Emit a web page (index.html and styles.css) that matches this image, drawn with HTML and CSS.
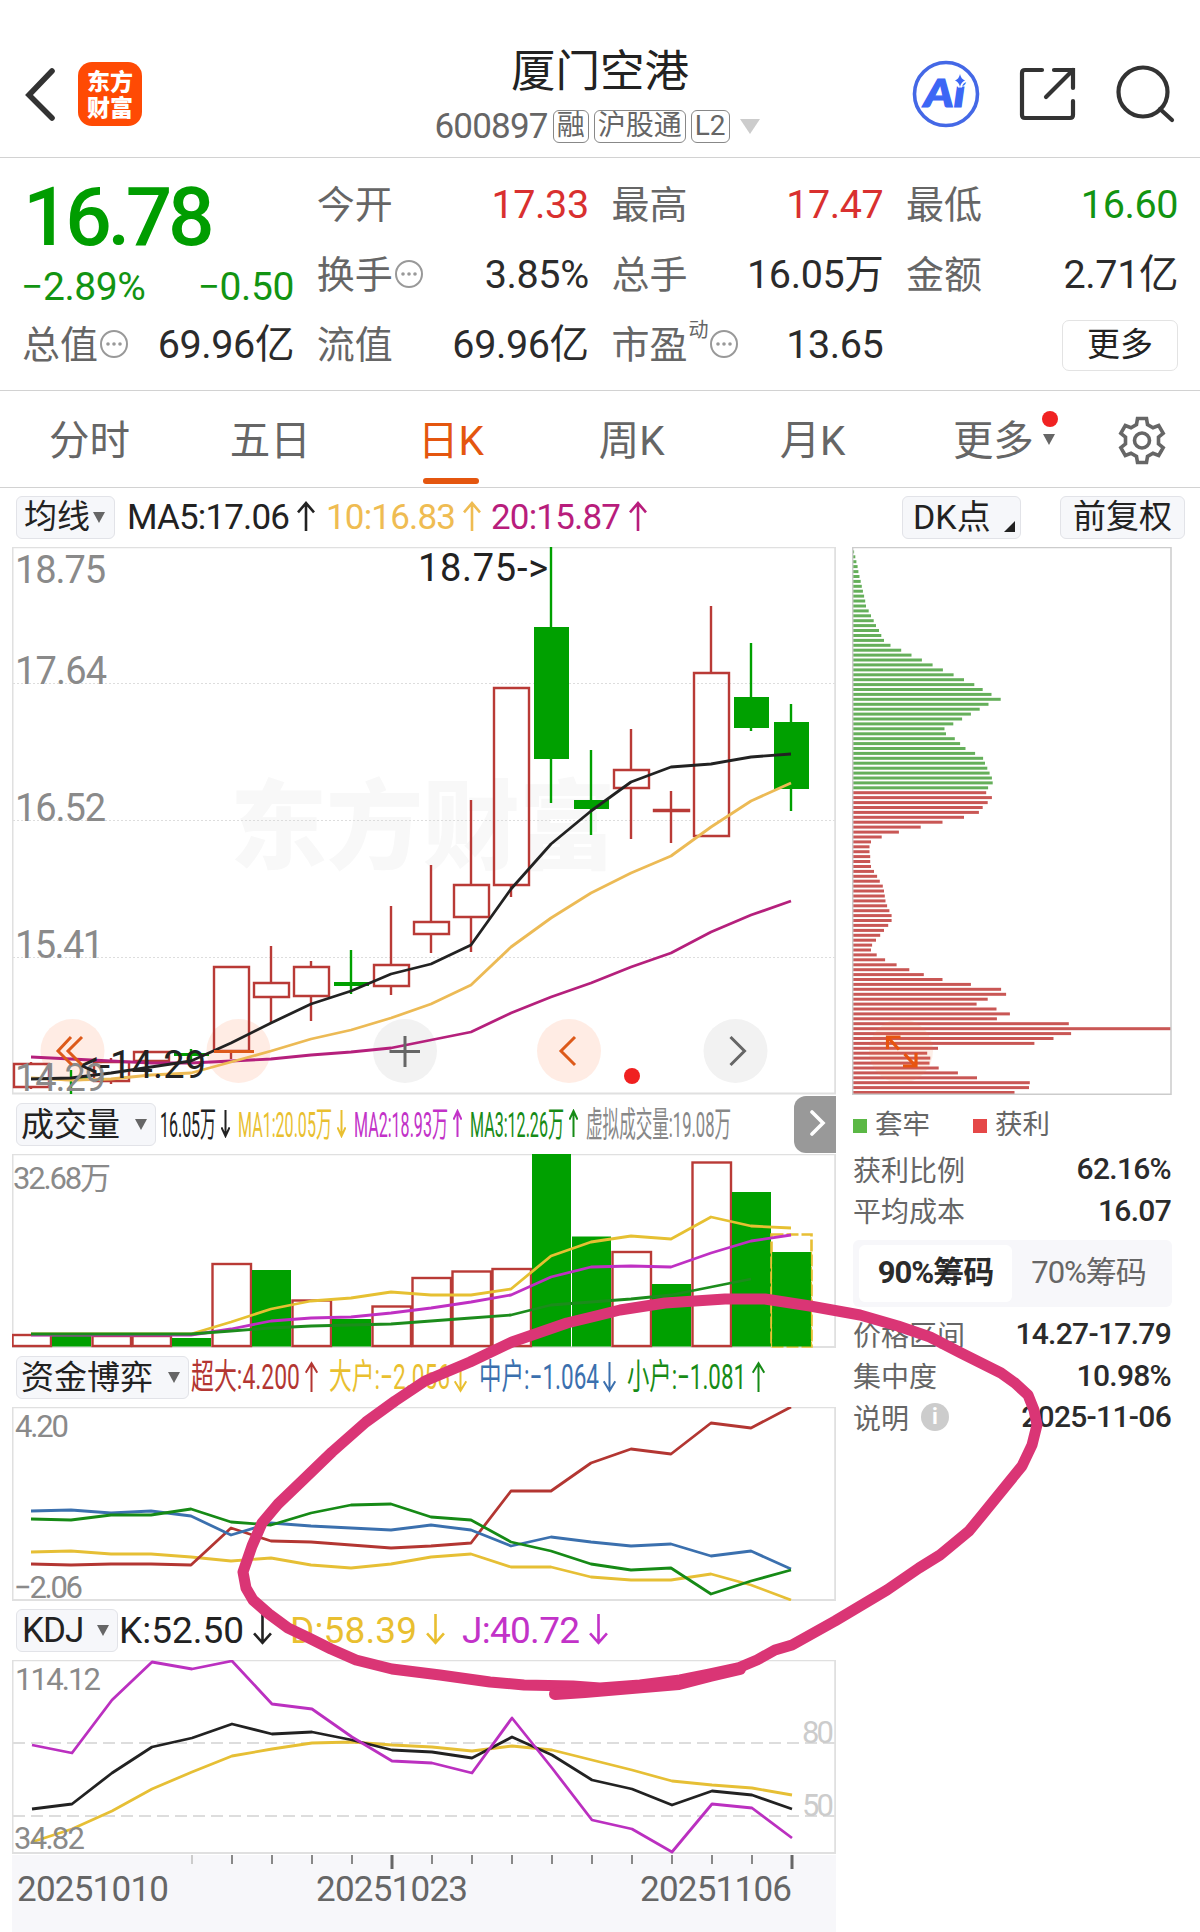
FILE: index.html
```
<!DOCTYPE html>
<html lang="zh-CN">
<head>
  <meta charset="UTF-8" />
  <meta name="viewport" content="width=device-width, initial-scale=1.0" />
  <title>厦门空港 600897</title>
  <link rel="stylesheet" href="styles.css">
</head>
<body>
  <svg class="defs" width="0" height="0">
    <symbol id="up" viewBox="0 0 18 30" preserveAspectRatio="none"><path d="M9 29V2M1 11l8-9 8 9" vector-effect="non-scaling-stroke" /></symbol>
    <symbol id="down" viewBox="0 0 18 30" preserveAspectRatio="none"><path d="M9 1v27M1 19l8 9 8-9" vector-effect="non-scaling-stroke" /></symbol>
    <symbol id="dots" viewBox="0 0 30 34">
      <ellipse cx="15" cy="17" rx="13" ry="13" fill="none" stroke="#999" stroke-width="2" />
      <circle cx="9" cy="17" r="1.8" fill="#999" /><circle cx="15" cy="17" r="1.8" fill="#999" /><circle cx="21" cy="17" r="1.8" fill="#999" />
    </symbol>
  </svg>

  <header class="header">
    <div class="header-left">
      <svg class="back" width="34" height="60" viewBox="0 0 34 60"><path d="M30 7L7 31l23 23" /></svg>
      <div class="logo"><span>东方</span><span>财富</span></div>
    </div>
    <div class="header-title">
      <h1>厦门空港</h1>
      <div class="code">
        <span class="code-num">600897</span>
        <span class="tag">融</span><span class="tag">沪股通</span><span class="tag">L2</span>
        <i class="tri tri-light"></i>
      </div>
    </div>
    <div class="header-icons">
      <svg width="68" height="68" viewBox="0 0 68 68">
        <circle cx="34" cy="34" r="31.5" fill="none" stroke="#4468e6" stroke-width="3.6" />
        <text class="ai-text" x="12" y="47" textLength="41" lengthAdjust="spacingAndGlyphs">Ai</text>
        <path d="M48 14q1 5 5 6.500-4 1.500-5 6.500-1-5-5-6.500 4-1.500 5-6.500z" fill="#3c66f5" stroke="#fff" stroke-width="4" paint-order="stroke" />
      </svg>
      <svg width="60" height="60" viewBox="0 0 60 60" class="line-icon">
        <path d="M24 6H7q-3 0-3 3v42q0 3 3 3h45q3 0 3-3V37M36 6h19v18M55 6L28 33" />
      </svg>
      <svg width="60" height="60" viewBox="0 0 60 60" class="line-icon">
        <circle cx="28" cy="28" r="24.500" /><path d="M45 45l12 11" />
      </svg>
    </div>
  </header>

  <section class="quote">
    <div class="price-box">
      <div class="price">16.78</div>
      <div class="change"><span>−2.89%</span><span>−0.50</span></div>
    </div>
    <div class="cell"><label>今开</label><b class="red">17.33</b></div>
    <div class="cell"><label>最高</label><b class="red">17.47</b></div>
    <div class="cell"><label>最低</label><b class="green">16.60</b></div>
    <div class="cell"><label>换手</label><svg class="more-dots"><use href="#dots" /></svg><b>3.85%</b></div>
    <div class="cell"><label>总手</label><b>16.05万</b></div>
    <div class="cell"><label>金额</label><b>2.71亿</b></div>
    <div class="cell"><label>总值</label><svg class="more-dots"><use href="#dots" /></svg><b>69.96亿</b></div>
    <div class="cell"><label>流值</label><b>69.96亿</b></div>
    <div class="cell"><label>市盈<sup>动</sup></label><svg class="more-dots"><use href="#dots" /></svg><b>13.65</b></div>
    <div class="cell"><button class="more-btn">更多</button></div>
  </section>

  <nav class="tabs">
    <a>分时</a>
    <a>五日</a>
    <a class="active">日K</a>
    <a>周K</a>
    <a>月K</a>
    <a class="tab-more">更多<i class="tri"></i></a>
    <span class="gear">
      <svg width="50" height="50" viewBox="0 0 50 50">
        <path d="M19.500 8.500L20.500 2.500h9l1 6 5.500 3.200 5.700-2.200 4.500 7.800-4.700 3.900v6.600l4.700 3.900-4.500 7.800-5.700-2.200-5.500 3.200-1 6h-9l-1-6-5.500-3.200-5.700 2.200-4.500-7.800 4.700-3.900v-6.600l-4.700-3.900 4.500-7.800 5.700 2.200z" />
        <circle cx="25" cy="24.500" r="7.500" />
      </svg>
    </span>
  </nav>

  <div class="ma-bar">
    <button class="picker picker-ma">均线<i class="tri"></i></button>
    <svg class="legend" width="540" height="59" viewBox="120 488 540 59">
      <g class="c-black"><text x="127" y="529" textLength="163">MA5:17.06</text><use href="#up" x="297" y="501" width="18" height="31" /></g>
      <g class="c-amber"><text x="326" y="529" textLength="130">10:16.83</text><use href="#up" x="463" y="501" width="18" height="31" /></g>
      <g class="c-rose"><text x="491" y="529" textLength="130">20:15.87</text><use href="#up" x="629" y="501" width="18" height="31" /></g>
    </svg>
    <button class="picker picker-dk">DK点<i class="corner"></i></button>
    <button class="picker picker-fq">前复权</button>
  </div>

  <main class="board">
    <div class="charts">
      <svg class="chart" width="824" height="548" viewBox="12 547 824 548">
        <text class="watermark" x="230" y="861" textLength="386">东方财富</text>
        <path class="grid-dot" d="M13 683.500H835M13 820.500H835M13 957.500H835" />
        <path class="frame" d="M12.500 547.300H835.200V1093.500H12.500z" />
        <g fill="#ffe9df" fill-opacity=".85">
          <circle cx="72.500" cy="1051" r="32" /><circle cx="238.500" cy="1051" r="32" /><circle cx="569" cy="1051" r="32" />
        </g>
        <g fill="#f2f2f2"><circle cx="405" cy="1051" r="32" /><circle cx="735.500" cy="1051" r="32" /></g>
        <g id="candles"></g>
        <g class="ma-line">
          <polyline stroke="#b5207c" points="31,1057 71,1059 111,1061 151,1063 191,1063 231,1061 271,1059 311,1055 351,1052 391,1048 431,1040 471,1032 511,1013 551,997 591,983 631,967 671,953 711,932 751,915 791,901" />
          <polyline stroke="#ecba55" points="31,1078 71,1080 111,1079 151,1075 191,1073 231,1062 271,1051 311,1039 351,1030 391,1018 431,1004 471,985 511,947 551,918 591,893 631,873 671,856 711,827 751,801 791,783" />
          <polyline stroke="#222" points="31,1079 71,1078 111,1073 151,1067 191,1061 231,1043 271,1023 311,1004 351,991 391,974 431,964 471,945 511,889 551,844 591,811 631,782 671,767 711,764 751,757 791,754" />
        </g>
        <g class="axis">
          <text x="15" y="583" textLength="91">18.75</text>
          <text x="15" y="684" textLength="92">17.64</text>
          <text x="15" y="821" textLength="91">16.52</text>
          <text x="15" y="958" textLength="89">15.41</text>
          <text x="15" y="1091" textLength="91">14.29</text>
        </g>
        <g class="mark">
          <text x="418" y="581" textLength="130">18.75-&gt;</text>
          <text x="80" y="1078" textLength="126">&lt;-14.29</text>
        </g>
        <path class="nav-orange" d="M71 1037l-13 14 14 14M82 1037l-14 14 14 14M575 1037l-14 14 14 14" />
        <path d="M214 1051.500h40" stroke="#dd5a1a" stroke-width="3" />
        <path class="nav-gray" d="M389.500 1051.500h30.500M405 1036v31M730.500 1037l14 14-14 14" />
        <circle cx="632" cy="1076" r="8" fill="#f02020" />
      </svg>

      <div class="bar">
        <button class="picker picker-vol">成交量<i class="tri"></i></button>
        <svg class="legend thin" width="638" height="59" viewBox="156 1095 638 59">
          <g class="c-black"><text x="160" y="1137" textLength="56" lengthAdjust="spacingAndGlyphs">16.05万</text><use href="#down" x="221" y="1109" width="9" height="29" /></g>
          <g class="c-yellow"><text x="238" y="1137" textLength="94" lengthAdjust="spacingAndGlyphs">MA1:20.05万</text><use href="#down" x="337" y="1109" width="9" height="29" /></g>
          <g class="c-purple"><text x="354" y="1137" textLength="94" lengthAdjust="spacingAndGlyphs">MA2:18.93万</text><use href="#up" x="453" y="1109" width="9" height="29" /></g>
          <g class="c-green"><text x="470" y="1137" textLength="94" lengthAdjust="spacingAndGlyphs">MA3:12.26万</text><use href="#up" x="569" y="1109" width="9" height="29" /></g>
          <g class="c-gray"><text x="586" y="1137" textLength="145" lengthAdjust="spacingAndGlyphs">虚拟成交量:19.08万</text></g>
        </svg>
        <button class="slide-btn"><svg width="16" height="26" viewBox="0 0 16 26"><path d="M2 2l11 11L2 24" /></svg></button>
      </div>

      <svg class="chart" width="824" height="194" viewBox="12 1154 824 194">
        <path class="frame" d="M12.500 1154.200H835.200V1347H12.500z" />
        <text class="axis sm" x="13" y="1189" textLength="98">32.68万</text>
        <g id="volumes"></g>
        <rect x="771.500" y="1234.500" width="40" height="112" fill="none" stroke="#e8bf35" stroke-width="2.600" stroke-dasharray="12 3" />
        <rect x="772" y="1252" width="39" height="94.500" fill="#00a000" />
        <path d="M771.500 1252v94M811.500 1252v94" stroke="#e8bf35" stroke-width="1.200" stroke-dasharray="12 3" />
        <g class="ma-line">
          <polyline stroke="#e6c032" points="31,1334 191,1334 231,1322 271,1309 311,1301 351,1298 391,1292 431,1295 471,1295 511,1289 551,1256 591,1242 631,1236 671,1239 711,1217 751,1226 791,1228" />
          <polyline stroke="#bf30c3" points="31,1335 191,1335 231,1329 271,1321 311,1318 351,1317 391,1313 431,1308 471,1302 511,1295 551,1277 591,1267 631,1266 671,1267 711,1253 751,1241 791,1235" />
          <polyline stroke="#1c8c1c" points="31,1334 191,1334 231,1331 271,1328 311,1326 351,1325 391,1324 431,1321 471,1318 511,1315 551,1305 591,1302 631,1299 671,1295 711,1287 751,1279" />
        </g>
      </svg>

      <div class="bar">
        <button class="picker picker-fund">资金博弈<i class="tri"></i></button>
        <svg class="legend thin" width="640" height="59" viewBox="189 1348 640 59">
          <g class="c-red"><text x="191" y="1389" textLength="109" lengthAdjust="spacingAndGlyphs">超大:4.200</text><use href="#up" x="305" y="1361" width="13" height="32" /></g>
          <g class="c-yellow"><text x="329" y="1389" textLength="121" lengthAdjust="spacingAndGlyphs">大户:−2.056</text><use href="#down" x="454" y="1361" width="13" height="32" /></g>
          <g class="c-blue"><text x="479" y="1389" textLength="120" lengthAdjust="spacingAndGlyphs">中户:−1.064</text><use href="#down" x="603" y="1361" width="13" height="32" /></g>
          <g class="c-green"><text x="627" y="1389" textLength="119" lengthAdjust="spacingAndGlyphs">小户:−1.081</text><use href="#up" x="752" y="1361" width="13" height="32" /></g>
        </svg>
      </div>

      <svg class="chart" width="824" height="194" viewBox="12 1407 824 194">
        <path class="frame" d="M12.500 1407.300H835.200V1600H12.500z" />
        <g class="ma-line">
          <polyline stroke="#e6bf35" points="31,1552 71,1551 111,1554 151,1554 191,1557 231,1561 271,1558 311,1565 351,1568 391,1564 431,1557 471,1554 511,1567 551,1567 591,1577 631,1580 671,1580 711,1574 751,1585 791,1600" />
          <polyline stroke="#b33632" points="31,1564 71,1565 111,1564 151,1564 191,1565 231,1528 271,1541 311,1542 351,1545 391,1548 431,1546 471,1543 511,1491 551,1491 591,1463 631,1449 671,1454 711,1423 751,1428 791,1407" />
          <polyline stroke="#3b70ae" points="31,1511 71,1510 111,1513 151,1511 191,1516 231,1535 271,1523 311,1526 351,1528 391,1530 431,1525 471,1530 511,1546 551,1537 591,1542 631,1546 671,1544 711,1556 751,1551 791,1569" />
          <polyline stroke="#168a16" points="31,1519 71,1520 111,1515 151,1515 191,1509 231,1522 271,1525 311,1513 351,1505 391,1504 431,1517 471,1520 511,1542 551,1551 591,1564 631,1570 671,1568 711,1594 751,1581 791,1570" />
        </g>
        <g class="axis sm">
          <text x="15" y="1437" textLength="54">4.20</text>
          <text x="14" y="1598" textLength="69">−2.06</text>
        </g>
      </svg>

      <div class="bar">
        <button class="picker picker-kdj">KDJ<i class="tri"></i></button>
        <svg class="legend big" width="600" height="59" viewBox="118 1601 600 59">
          <g class="c-black"><text x="119" y="1643" textLength="125">K:52.50</text><use href="#down" x="253" y="1613" width="19" height="32" /></g>
          <g class="c-yellow"><text x="290" y="1643" textLength="127">D:58.39</text><use href="#down" x="426" y="1613" width="19" height="32" /></g>
          <g class="c-purple"><text x="462" y="1643" textLength="118">J:40.72</text><use href="#down" x="589" y="1613" width="19" height="32" /></g>
        </svg>
      </div>

      <svg class="chart" width="824" height="272" viewBox="12 1660 824 272">
        <rect x="12" y="1855" width="824" height="77" fill="#f7f7fa" />
        <path d="M13 1743H835M13 1816H835" stroke="#ddd" stroke-width="2" stroke-dasharray="12 6" />
        <path class="frame" d="M12.500 1660.300H835.200V1853H12.500z" />
        <g class="ma-line">
          <polyline stroke="#e6bf35" points="32,1842 72,1829 112,1811 152,1789 192,1772 232,1756 272,1749 312,1743 352,1742 392,1745 432,1747 472,1751 512,1746 552,1750 592,1760 632,1770 672,1781 712,1785 752,1788 792,1795" />
          <polyline stroke="#222" points="32,1809 72,1804 112,1773 152,1747 192,1738 232,1724 272,1734 312,1732 352,1740 392,1750 432,1752 472,1758 512,1737 552,1755 592,1780 632,1789 672,1805 712,1791 752,1795 792,1809" />
          <polyline stroke="#bb30c0" points="32,1745 72,1753 112,1700 152,1662 192,1669 232,1661 272,1704 312,1709 352,1737 392,1761 432,1763 472,1773 512,1718 552,1768 592,1820 632,1829 672,1852 712,1804 752,1808 792,1838" />
        </g>
        <g class="axis sm">
          <text x="15" y="1690" textLength="86">114.12</text>
          <text x="14" y="1849" textLength="71">34.82</text>
          <text class="faint" x="802" y="1743" textLength="32">80</text>
          <text class="faint" x="802" y="1816" textLength="32">50</text>
        </g>
        <path d="M192 1855v9" stroke="#ccc" stroke-width="2" />
        <path d="M232 1855v9M272 1855v9M312 1855v9M352 1855v9M432 1855v9M472 1855v9M512 1855v9M552 1855v9M592 1855v9M632 1855v9M672 1855v9M712 1855v9M752 1855v9" stroke="#888" stroke-width="2" />
        <path d="M392 1855v14M792 1855v14" stroke="#666" stroke-width="3" />
        <g class="dates">
          <text x="17" y="1901" textLength="152">20251010</text>
          <text x="316" y="1901" textLength="152">20251023</text>
          <text x="640" y="1901" textLength="152">20251106</text>
        </g>
      </svg>
    </div>

    <aside class="chips">
      <svg class="chart" width="320" height="548" viewBox="852 547 320 548">
        <g id="chips"></g>
        <path d="M852.700 547.500H1171V1094.300H852.700z" fill="none" stroke="#ccc" stroke-width="1.500" />
        <circle cx="901" cy="1051" r="32" fill="#f37b45" opacity=".13" />
        <path d="M887.500 1049v-12h13M888 1037.500l11 12M916 1053v13h-13M915.500 1066l-11-12" fill="none" stroke="#e8540e" stroke-width="3.200" />
      </svg>
      <div class="chips-legend">
        <span><i class="sq sq-green"></i>套牢</span>
        <span><i class="sq sq-red"></i>获利</span>
      </div>
      <dl>
        <div><dt>获利比例</dt><dd>62.16%</dd></div>
        <div><dt>平均成本</dt><dd>16.07</dd></div>
      </dl>
      <div class="segment"><span class="on">90%筹码</span><span>70%筹码</span></div>
      <dl>
        <div><dt>价格区间</dt><dd>14.27-17.79</dd></div>
        <div><dt>集中度</dt><dd>10.98%</dd></div>
        <div><dt>说明<i class="info">i</i></dt><dd>2025-11-06</dd></div>
      </dl>
    </aside>
  </main>

  <!-- hand drawn marker -->
  <svg class="marker" width="1200" height="1932" viewBox="0 0 1200 1932">
    <polyline stroke-width="11" points="243,1572 246,1588 253,1600 269,1614 288,1628 309,1638 331,1649 356,1660 392,1669 440,1675 490,1682 524,1685 573,1686 600,1688 640,1685 680,1680 710,1674 738,1668 757,1660 775,1650 792,1645 835,1621 887,1590 919,1568 940,1555 969,1531 983,1514 996,1498 1022,1466 1032,1445 1037,1425 1034,1410 1028,1395 1015,1383 1001,1373 961,1353 930,1337 898,1326 860,1315 810,1306 765,1299 725,1299 665,1303 620,1310 600,1315 567,1323 512,1342 470,1362 425,1381 395,1401 366,1422 332,1452 303,1480 278,1504 262,1523 252,1546 243,1572" />
    <polyline stroke-width="12" points="555,1694 585,1692 620,1689 679,1684 710,1676 740,1669" />
  </svg>

  <script>
    const RED = '#b93a36';
    const GREEN = '#00a000';

    // [up, high, low, top, bottom]
    const candles = [
      [1, 1062, 1089, 1064, 1087], [0, 1070, 1094, 1077, 1080], [1, 1058, 1084, 1062, 1081],
      [1, 1052, 1061, 1052, 1061], [0, 1049, 1060, 1053, 1056], [1, 967, 1059, 967, 1051],
      [1, 946, 1023, 983, 997], [1, 961, 1021, 967, 996], [0, 950, 994, 982, 986],
      [1, 906, 995, 965, 986], [1, 865, 953, 922, 934], [1, 800, 952, 885, 917],
      [1, 688, 897, 688, 885], [0, 547, 803, 627, 759], [0, 750, 835, 800, 809],
      [1, 729, 839, 770, 788], [1, 791, 843, 810, 811], [1, 606, 836, 673, 836],
      [0, 643, 731, 697, 728], [0, 704, 811, 722, 789]
    ];

    // [up, top]
    const volumes = [
      [1, 1335], [0, 1336], [1, 1336], [1, 1336], [0, 1338], [1, 1264], [0, 1270],
      [1, 1300.5], [0, 1319], [1, 1306.5], [1, 1278], [1, 1271.5], [1, 1269],
      [0, 1154], [0, 1236.5], [1, 1252], [0, 1284], [1, 1162.5], [0, 1192]
    ];

    const chips = [
      3, 6, 9, 12, 14, 17, 20, 23, 26, 29, 32, 34, 41, 47, 54, 60, 68, 74, 81, 98, 126, 153, 180,
      208, 235, 263, 290, 317, 339, 362, 386, 354, 331, 308, 285, 262, 239, 243, 266, 280, 294,
      319, 340, 345, 351, 357, 363, 365, 353, 348, 363, 352, 339, 329, 290, 234, 177, 120, 75, 47,
      43, 43, 45, 45, 47, 55, 63, 70, 78, 81, 83, 85, 89, 95, 101, 101, 92, 81, 71, 60, 50, 47, 62,
      84, 114, 147, 185, 234, 308, 387, 400, 352, 323, 375, 410, 376, 564, 831, 570, 524, 474, 222,
      194, 202, 200, 224, 274, 324, 462, 460, 422
    ];
    const trapped = 49;

    document.getElementById('candles').innerHTML = candles.map(([up, high, low, top, bottom], i) => {
      const x = 31 + i * 40;
      if (up) {
        return `<path d="M${x} ${high}V${top}M${x} ${bottom}V${low}M${x - 17} ${top}h35V${bottom}h-35z" fill="none" stroke="${RED}" stroke-width="2.4"/>`;
      }
      return `<path d="M${x} ${high}V${low}" stroke="${GREEN}" stroke-width="2.4"/>
        <rect x="${x - 17}" y="${top}" width="35" height="${bottom - top}" fill="${GREEN}"/>`;
    }).join('');

    document.getElementById('volumes').innerHTML = volumes.map(([up, top], i) => {
      const x = 32 + i * 40;
      if (up) {
        return `<rect x="${x - 19.5}" y="${top}" width="38.5" height="${1346 - top}" fill="none" stroke="${RED}" stroke-width="2.4"/>`;
      }
      return `<rect x="${x - 20}" y="${top}" width="39" height="${1346.5 - top}" fill="${GREEN}"/>`;
    }).join('');

    document.getElementById('chips').innerHTML = chips.map((v, i) =>
      `<rect x="853" y="${(550.4 + i * 4.915).toFixed(1)}" width="${(v / 831 * 318).toFixed(1)}" height="3" fill="${i < trapped ? '#65af5a' : '#c95755'}"/>`
    ).join('');
  </script>
</body>
</html>
```

FILE: styles.css
```
* {
  box-sizing: border-box;
}
body {
  margin: 0;
  width: 1200px;
  height: 1932px;
  position: relative;
  overflow: hidden;
  background: #fff;
  color: #2b2b2b;
  font-family: Roboto, "Noto Sans CJK SC", sans-serif;
}
.defs {
  position: absolute;
}
button {
  font-family: inherit;
  padding: 0;
  color: #222;
}
i {
  font-style: normal;
}
svg {
  flex: none;
}
.red {
  color: #d9302f;
}
.green {
  color: #129412;
}
.tri {
  display: inline-block;
  border: 6.5px solid transparent;
  border-top: 11px solid #666;
  border-bottom: 0;
}
.tri-light {
  border-width: 15px 10.5px 0;
  border-top-color: #ccc;
  margin-left: 5px;
}

/* header */
.header {
  height: 158px;
  border-bottom: 1px solid #d2d2d2;
  display: grid;
  grid-template-columns: 400px 400px 400px;
  padding-top: 30px;
}
.header-left {
  display: flex;
  align-items: center;
  padding-left: 22px;
}
.back path {
  fill: none;
  stroke: #333;
  stroke-width: 5.6;
  stroke-linecap: round;
}
.logo {
  width: 64px;
  height: 64px;
  margin-left: 22px;
  border-radius: 14px;
  background: #ff4a04;
  color: #fff;
  font: 900 23px/27px "Noto Sans CJK SC", sans-serif;
  display: flex;
  flex-direction: column;
  align-items: center;
  justify-content: center;
}
.logo span {
  margin-top: -1px;
}
.header-title {
  display: flex;
  flex-direction: column;
  align-items: center;
}
.header-title h1 {
  margin: 15px 0 0;
  font-size: 44.5px;
  font-weight: 400;
  line-height: 54px;
  color: #222;
}
.code {
  display: flex;
  align-items: center;
  gap: 5px;
  height: 34px;
  margin: 10px 6px 0 0;
  font-size: 35px;
  line-height: 34px;
  color: #666;
}
.code-num {
  letter-spacing: -0.8px;
  padding-top: 2px;
}
.tag {
  height: 33px;
  padding: 0 3px;
  border: 1.5px solid #888;
  border-radius: 6px;
  font-size: 28px;
  line-height: 30px;
}
.header-icons {
  display: flex;
  align-items: center;
  padding-left: 112px;
  gap: 38px;
}
.header-icons svg + svg + svg {
  margin-left: -1px;
}
.ai-text {
  font: italic 900 38px Lato, sans-serif;
  fill: #3c66f5;
  stroke: #3c66f5;
  stroke-width: 1.2;
}
.line-icon {
  fill: none;
  stroke: #333;
  stroke-width: 4.2;
  stroke-linecap: round;
}

/* quote */
.quote {
  height: 233px;
  padding: 12px 22px 0 23px;
  border-bottom: 1px solid #d2d2d2;
  display: grid;
  grid-template-columns: repeat(4, 271px);
  grid-template-rows: repeat(3, 70px);
  column-gap: 23.700px;
}
.price-box {
  grid-row: span 2;
  color: #009d00;
}
.price {
  font-size: 82px;
  font-weight: 500;
  line-height: 94px;
  letter-spacing: -4.4px;
}
.change {
  display: flex;
  justify-content: space-between;
  font-size: 39px;
  line-height: 46px;
  letter-spacing: -0.4px;
  color: #129412;
}
.change span:first-child {
  margin-left: -2px;
}
.cell {
  display: flex;
  align-items: center;
  font-size: 38px;
  line-height: 50px;
}
.cell label {
  color: #666;
  margin-left: -1px;
}
.cell b {
  margin-left: auto;
  font-size: 39.500px;
  font-weight: 400;
  letter-spacing: -0.4px;
}
.cell sup {
  font-size: 20px;
  line-height: 0;
  position: relative;
  top: -7px;
  margin-left: 1px;
}
.more-dots {
  width: 30px;
  height: 34px;
  margin: -3px 0 0 1px;
}
.more-btn {
  width: 116px;
  height: 51px;
  margin-left: auto;
  border: 1.5px solid #e3e3e3;
  border-radius: 7px;
  background: #fff;
  font-size: 33px;
  line-height: 44px;
}

/* period tabs */
.tabs {
  height: 97px;
  border-bottom: 1px solid #d2d2d2;
  display: grid;
  grid-template-columns: repeat(6, 180.800px) 1fr;
}
.tabs a {
  position: relative;
  left: -1px;
  font-size: 40.5px;
  line-height: 100px;
  text-align: center;
  color: #666;
}
.tabs .active {
  color: #e4560f;
}
.tabs .active::after {
  content: "";
  position: absolute;
  left: 62px;
  bottom: 7px;
  width: 56px;
  height: 6px;
  border-radius: 3px;
  background: #e4560f;
}
.tab-more .tri {
  position: absolute;
  left: 140px;
  top: 43px;
}
.tab-more::after {
  content: "";
  position: absolute;
  left: 139px;
  top: 20px;
  width: 16px;
  height: 16px;
  border-radius: 50%;
  background: #f02222;
}
.gear {
  display: flex;
  align-items: center;
  justify-content: center;
}
.gear svg {
  fill: none;
  stroke: #666;
  stroke-width: 3.6;
}

/* indicator bars */
.ma-bar {
  height: 59px;
  display: flex;
  align-items: center;
  padding: 0 16px 1px;
}
.ma-bar .legend {
  margin-left: 5px;
}
.bar {
  height: 59px;
  display: flex;
  align-items: center;
  padding-left: 4px;
}
.picker {
  height: 43px;
  flex: none;
  display: flex;
  align-items: center;
  border: 1.5px solid #e2e3e8;
  border-radius: 6px;
  background: #f6f7fa;
  font-size: 33px;
  line-height: 40px;
  white-space: nowrap;
}
.picker-ma {
  width: 99px;
  padding-left: 7px;
}
.picker-ma .tri {
  margin-left: 3px;
}
.picker-dk {
  width: 119px;
  margin-left: 242px;
  padding-left: 10px;
  position: relative;
  font-size: 34px;
}
.corner {
  position: absolute;
  right: 5px;
  bottom: 6px;
  border-left: 11px solid transparent;
  border-bottom: 11px solid #222;
}
.picker-fq {
  width: 125px;
  margin-left: 39px;
  justify-content: center;
}
.picker-vol {
  width: 140px;
  padding-left: 4px;
}
.picker-vol .tri,
.picker-fund .tri,
.picker-kdj .tri {
  margin-left: auto;
  margin-right: 8px;
}
.picker-fund {
  width: 173px;
  padding-left: 4px;
}
.picker-kdj {
  width: 102px;
  padding-left: 5px;
  font-size: 35px;
  letter-spacing: -1px;
}
.legend {
  font-size: 35px;
}
.legend use {
  fill: none;
  stroke-width: 2.6;
}
.legend.thin use {
  stroke-width: 2;
}
.legend.big {
  font-size: 37px;
}
.c-black { fill: #222; }
.c-black use { stroke: #222; }
.c-amber { fill: #efbc52; }
.c-amber use { stroke: #efbc52; }
.c-rose { fill: #b81d7c; }
.c-rose use { stroke: #b81d7c; }
.c-yellow { fill: #e9bf30; }
.c-yellow use { stroke: #e9bf30; }
.c-purple { fill: #c232c8; }
.c-purple use { stroke: #c232c8; }
.c-green { fill: #178b17; }
.c-green use { stroke: #178b17; }
.c-red { fill: #b33632; }
.c-red use { stroke: #b33632; }
.c-blue { fill: #3b70ae; }
.c-blue use { stroke: #3b70ae; }
.c-gray { fill: #888; }
.slide-btn {
  width: 42px;
  height: 57px;
  margin-left: auto;
  padding-left: 6px;
  border: 0;
  border-radius: 12px 0 0 12px;
  background: #999;
}
.slide-btn path {
  fill: none;
  stroke: #fff;
  stroke-width: 3.6;
  stroke-linecap: round;
}

/* charts */
.board {
  display: flex;
  padding-left: 12px;
}
.charts {
  width: 824px;
}
.chart {
  display: block;
}
.frame {
  fill: none;
  stroke: #e0e0e0;
  stroke-width: 2;
}
.grid-dot {
  stroke: #ddd;
  stroke-dasharray: 2 2;
}
.watermark {
  font: 900 97px "Noto Sans CJK SC", sans-serif;
  fill: #f8f8f8;
}
.ma-line {
  fill: none;
  stroke-width: 2.8;
  stroke-linejoin: round;
}
.axis {
  font-size: 38px;
  fill: #8a8a8a;
}
.axis.sm {
  font-size: 31px;
}
.axis .faint {
  fill: #ccc;
}
.mark {
  font-size: 38px;
  fill: #222;
}
.dates {
  font-size: 35px;
  fill: #666;
}
.nav-orange {
  fill: none;
  stroke: #dd5a1a;
  stroke-width: 3;
}
.nav-gray {
  fill: none;
  stroke: #666;
  stroke-width: 3;
}

/* chip distribution */
.chips {
  width: 320px;
  margin-left: 16px;
}
.chips-legend {
  height: 53px;
  display: flex;
  align-items: center;
  gap: 42px;
  font-size: 27.500px;
  color: #666;
}
.sq {
  display: inline-block;
  width: 14px;
  height: 14px;
  margin: 0 8px 1px 1px;
  background: #5bb845;
}
.sq-red {
  background: #e54848;
}
.chips dl {
  margin: 0;
  color: #666;
}
.chips dl div {
  height: 41.5px;
  display: flex;
  align-items: center;
  justify-content: space-between;
  padding: 0 1px;
  font-size: 28px;
}
.chips dt {
  display: flex;
  align-items: center;
}
.chips dd {
  margin: 0;
  font-size: 30px;
  font-weight: 500;
  letter-spacing: -0.7px;
  color: #2b2b2b;
}
.segment {
  height: 67px;
  margin: 9px 0 6px 1px;
  padding: 5px 6px;
  border-radius: 6px;
  background: #f7f7fa;
  display: flex;
  font-size: 31px;
  line-height: 56px;
  letter-spacing: -1px;
  color: #666;
}
.segment span {
  width: 153px;
  text-align: center;
}
.segment .on {
  border-radius: 6px;
  background: #fff;
  color: #2b2b2b;
  font-weight: 700;
}
.info {
  width: 28px;
  height: 28px;
  margin-left: 12px;
  border-radius: 50%;
  background: #ccc;
  color: #fff;
  font-size: 22px;
  font-weight: 700;
  line-height: 28px;
  text-align: center;
}

.marker {
  position: absolute;
  left: 0;
  top: 0;
  pointer-events: none;
}
.marker polyline {
  fill: none;
  stroke: #da3575;
  stroke-linecap: round;
  stroke-linejoin: round;
}
```
